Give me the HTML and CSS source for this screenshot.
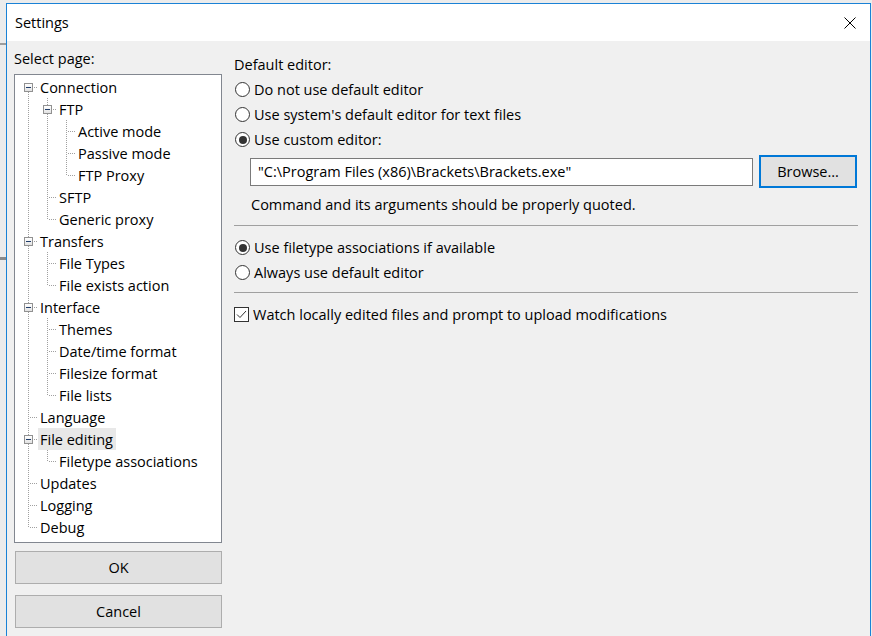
FILE: index.html
```html
<!DOCTYPE html>
<html>
<head>
<meta charset="utf-8">
<title>Settings</title>
<link rel="stylesheet" href="styles.css">
</head>
<body>
<div class="window">
  <div class="titlebar">
    <span class="title">Settings</span>
    <svg class="close" width="12" height="12" viewBox="0 0 12 12"><path d="M0.5 0.5 L11.5 11.5 M11.5 0.5 L0.5 11.5" stroke="#000" stroke-width="1" fill="none"/></svg>
  </div>
  <div class="body">
    <div class="left">
      <div class="label">Select page:</div>
      <div class="tree">
        <div class="row"><span class="c c-first"><span class="box"></span></span><span class="t">Connection</span></div>
        <div class="row"><span class="c c-pass"></span><span class="c c-tee"><span class="box"></span></span><span class="t">FTP</span></div>
        <div class="row"><span class="c c-pass"></span><span class="c c-pass"></span><span class="c c-tee"></span><span class="t">Active mode</span></div>
        <div class="row"><span class="c c-pass"></span><span class="c c-pass"></span><span class="c c-tee"></span><span class="t">Passive mode</span></div>
        <div class="row"><span class="c c-pass"></span><span class="c c-pass"></span><span class="c c-elbow"></span><span class="t">FTP Proxy</span></div>
        <div class="row"><span class="c c-pass"></span><span class="c c-tee"></span><span class="t">SFTP</span></div>
        <div class="row"><span class="c c-pass"></span><span class="c c-elbow"></span><span class="t">Generic proxy</span></div>
        <div class="row"><span class="c c-tee"><span class="box"></span></span><span class="t">Transfers</span></div>
        <div class="row"><span class="c c-pass"></span><span class="c c-tee"></span><span class="t">File Types</span></div>
        <div class="row"><span class="c c-pass"></span><span class="c c-elbow"></span><span class="t">File exists action</span></div>
        <div class="row"><span class="c c-tee"><span class="box"></span></span><span class="t">Interface</span></div>
        <div class="row"><span class="c c-pass"></span><span class="c c-tee"></span><span class="t">Themes</span></div>
        <div class="row"><span class="c c-pass"></span><span class="c c-tee"></span><span class="t">Date/time format</span></div>
        <div class="row"><span class="c c-pass"></span><span class="c c-tee"></span><span class="t">Filesize format</span></div>
        <div class="row"><span class="c c-pass"></span><span class="c c-elbow"></span><span class="t">File lists</span></div>
        <div class="row"><span class="c c-tee"></span><span class="t">Language</span></div>
        <div class="row"><span class="c c-tee"><span class="box"></span></span><span class="t sel">File editing</span></div>
        <div class="row"><span class="c c-pass"></span><span class="c c-elbow"></span><span class="t">Filetype associations</span></div>
        <div class="row"><span class="c c-tee"></span><span class="t">Updates</span></div>
        <div class="row"><span class="c c-tee"></span><span class="t">Logging</span></div>
        <div class="row"><span class="c c-elbow"></span><span class="t">Debug</span></div>
      </div>
      <button class="btn ok">OK</button>
      <button class="btn cancel">Cancel</button>
    </div>
    <div class="right">
      <div class="line">Default editor:</div>
      <div class="opt"><span class="radio"></span><span>Do not use default editor</span></div>
      <div class="opt"><span class="radio"></span><span>Use system's default editor for text files</span></div>
      <div class="opt"><span class="radio on"></span><span>Use custom editor:</span></div>
      <div class="editrow">
        <div class="input">"C:\Program Files (x86)\Brackets\Brackets.exe"</div>
        <button class="btn browse">Browse...</button>
      </div>
      <div class="hint">Command and its arguments should be properly quoted.</div>
      <div class="sep sep1"></div>
      <div class="opt first"><span class="radio on"></span><span>Use filetype associations if available</span></div>
      <div class="opt"><span class="radio"></span><span>Always use default editor</span></div>
      <div class="sep sep2"></div>
      <div class="opt first"><span class="check"><svg width="13" height="13" viewBox="0 0 13 13"><path d="M2 6.5 L5 9.5 L11 3" stroke="#333" stroke-width="1" fill="none"/></svg></span><span>Watch locally edited files and prompt to upload modifications</span></div>
    </div>
  </div>
</div>
</body>
</html>
```

FILE: styles.css
```css
* { box-sizing: border-box; }

html, body {
  margin: 0;
  padding: 0;
  height: 100%;
  overflow: hidden;
}

body {
  background:
    linear-gradient(#9c9c9c, #9c9c9c) 0 43px / 6px 2px no-repeat,
    linear-gradient(#8a8a8a, #8a8a8a) 0 257px / 6px 3px no-repeat,
    #ececec;
  font-family: "Open Sans", "Noto Sans", sans-serif;
  font-size: 14.5px;
  color: #000;
  padding: 3px 0 0 6px;
}

.window {
  width: 865px;
  height: 640px;
  border: 1px solid #1a82d6;
  border-bottom: none;
  background: #f0f0f0;
  display: flex;
  flex-direction: column;
}

.titlebar {
  height: 37px;
  background: #fff;
  display: flex;
  align-items: center;
  justify-content: space-between;
  padding: 0 14px 0 8px;
}

.title {
  font-size: 14.5px;
  line-height: 20px;
  padding-top: 1px;
}

.close { display: block; }

.body {
  display: flex;
  gap: 12px;
  padding: 8px 12px 0 7px;
}

.left {
  width: 208px;
  display: flex;
  flex-direction: column;
}

.label {
  line-height: 20px;
  height: 20px;
}

.tree {
  margin-top: 5px;
  height: 469px;
  border: 1px solid #828790;
  background: #fff;
  padding: 1px 0 0 4px;
}

.row {
  display: flex;
  align-items: center;
  height: 22px;
}

.c {
  width: 19px;
  height: 22px;
  flex: none;
  display: flex;
  align-items: center;
}

.c-pass {
  background: repeating-linear-gradient(to bottom, #a0a0a0 0 1px, transparent 1px 2px) 9px 0 / 1px 22px no-repeat;
}

.c-tee {
  background:
    repeating-linear-gradient(to bottom, #a0a0a0 0 1px, transparent 1px 2px) 9px 0 / 1px 22px no-repeat,
    repeating-linear-gradient(to right, #a0a0a0 0 1px, transparent 1px 2px) 11px 11px / 8px 1px no-repeat;
}

.c-elbow {
  background:
    repeating-linear-gradient(to bottom, #a0a0a0 0 1px, transparent 1px 2px) 9px 0 / 1px 12px no-repeat,
    repeating-linear-gradient(to right, #a0a0a0 0 1px, transparent 1px 2px) 11px 11px / 8px 1px no-repeat;
}

.c-first {
  background:
    repeating-linear-gradient(to bottom, #a0a0a0 0 1px, transparent 1px 2px) 9px 12px / 1px 10px no-repeat,
    repeating-linear-gradient(to right, #a0a0a0 0 1px, transparent 1px 2px) 11px 11px / 8px 1px no-repeat;
}

.box {
  width: 9px;
  height: 9px;
  margin-left: 5px;
  margin-top: 1px;
  border: 1px solid #919191;
  background:
    linear-gradient(#1f3c6a, #1f3c6a) 1px 3px / 5px 1px no-repeat,
    linear-gradient(#ffffff, #e2e2e2);
}

.t {
  height: 22px;
  line-height: 21px;
  padding: 1px 3px 0 2px;
  white-space: nowrap;
}

.t.sel {
  background: #e8e8e8;
}

.btn {
  font-family: inherit;
  font-size: 14.5px;
  color: #000;
  background: #e1e1e1;
  border: 1px solid #adadad;
  padding: 0;
  height: 33px;
  margin: 0;
}

.ok, .cancel { margin-left: 1px; }
.ok { margin-top: 8px; }
.cancel { margin-top: 11px; }

.right {
  width: 624px;
  padding-top: 3px;
  display: flex;
  flex-direction: column;
}

.line {
  height: 25px;
  line-height: 25px;
}

.opt {
  height: 25px;
  display: flex;
  align-items: center;
  gap: 4px;
  white-space: nowrap;
}

.opt.first { margin-top: 9px; }

.radio {
  width: 15px;
  height: 15px;
  margin-left: 1px;
  border: 1px solid #333;
  border-radius: 50%;
  background: #fff;
  flex: none;
  display: flex;
  align-items: center;
  justify-content: center;
}

.radio.on::after {
  content: "";
  width: 8px;
  height: 8px;
  border-radius: 50%;
  background: #333;
}

.check {
  width: 15px;
  height: 15px;
  border: 1px solid #333;
  background: #fff;
  flex: none;
  display: flex;
  align-items: center;
  justify-content: center;
}

.check svg { display: block; }

.editrow {
  display: flex;
  align-items: center;
  margin-top: 3px;
  height: 33px;
}

.input {
  margin-left: 16px;
  width: 503px;
  height: 28px;
  border: 1px solid #7a7a7a;
  background: #fff;
  line-height: 26px;
  padding-left: 7px;
  white-space: nowrap;
}

.browse {
  margin-left: 6px;
  width: 98px;
  height: 33px;
  border: 2px solid #0078d7;
}

.hint {
  margin-top: 7px;
  margin-left: 17px;
  line-height: 20px;
  height: 20px;
}

.sep {
  height: 1px;
  background: #a0a0a0;
}

.sep1 { margin-top: 10px; }
.sep2 { margin-top: 7px; }
```
